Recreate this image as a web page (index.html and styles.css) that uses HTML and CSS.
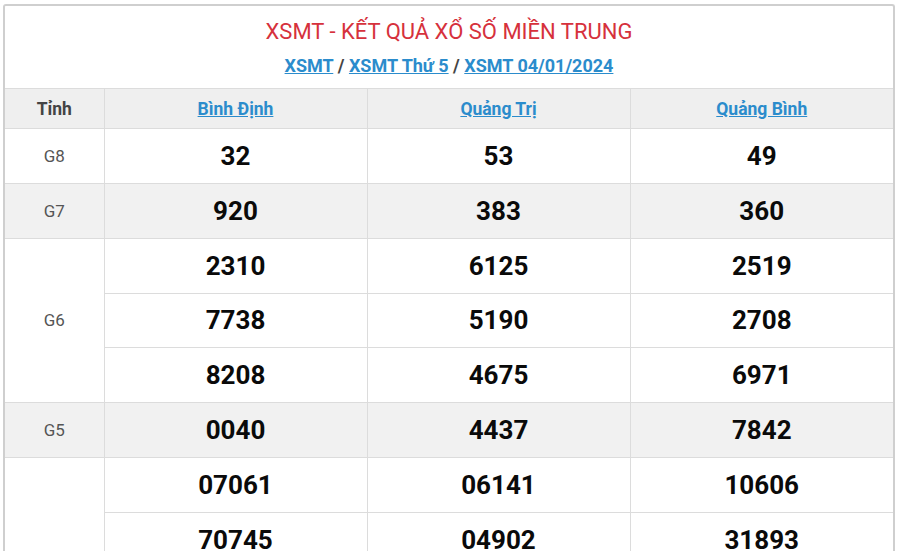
FILE: index.html
```html
<!DOCTYPE html>
<html lang="vi">
<head>
<meta charset="utf-8">
<title>XSMT</title>
<link rel="stylesheet" href="styles.css">
</head>
<body>
<div class="page">
  <div class="card">
    <div class="head">
      <h2 class="title">XSMT - KẾT QUẢ XỔ SỐ MIỀN TRUNG</h2>
      <div class="crumbs"><a href="#">XSMT</a> <span class="sep">/</span> <a href="#">XSMT Thứ 5</a> <span class="sep">/</span> <a href="#">XSMT 04/01/2024</a></div>
    </div>
    <table class="results">
      <colgroup><col class="c0"><col class="c1"><col class="c1"><col class="c1"></colgroup>
      <thead>
        <tr><th class="lbl">Tỉnh</th><th><a href="#">Bình Định</a></th><th><a href="#">Quảng Trị</a></th><th><a href="#">Quảng Bình</a></th></tr>
      </thead>
      <tbody>
        <tr><td class="lbl">G8</td><td>32</td><td>53</td><td>49</td></tr>
        <tr class="alt"><td class="lbl">G7</td><td>920</td><td>383</td><td>360</td></tr>
        <tr><td class="lbl" rowspan="3">G6</td><td>2310</td><td>6125</td><td>2519</td></tr>
        <tr><td>7738</td><td>5190</td><td>2708</td></tr>
        <tr><td>8208</td><td>4675</td><td>6971</td></tr>
        <tr class="alt"><td class="lbl">G5</td><td>0040</td><td>4437</td><td>7842</td></tr>
        <tr><td class="lbl" rowspan="2"></td><td>07061</td><td>06141</td><td>10606</td></tr>
        <tr><td>70745</td><td>04902</td><td>31893</td></tr>
      </tbody>
    </table>
  </div>
</div>
</body>
</html>
```
FILE: styles.css
```css
html, body { margin: 0; padding: 0; background: #fff; }
body { font-family: Roboto, "Liberation Sans", Arial, sans-serif; }
.page { padding: 4px 5px 0 3px; height: 551px; box-sizing: border-box; overflow: hidden; }
.card { border: 2px solid #cfcfcf; border-bottom: none; border-radius: 3px 3px 0 0; background: #fff; }
.head { height: 82px; text-align: center; box-sizing: border-box; padding-top: 13px; }
.title { margin: 0; font-weight: 400; font-size: 22px; line-height: 26px; color: #d6313c; }
.crumbs { margin-top: 10px; font-size: 18px; line-height: 22px; font-weight: 700; color: #444; }
.crumbs a { color: #2b8ccc; text-decoration: underline; }
.crumbs .sep { margin: 0; }
.results { width: 100%; border-collapse: collapse; table-layout: fixed; }
.c0 { width: 99px; }
.results th, .results td { border: 1px solid #dcdcdc; text-align: center; padding: 0; }
.results tr > :first-child { border-left: none; }
.results tr > :last-child { border-right: none; }
.results th { height: 39px; background: #efefef; font-size: 17.5px; font-weight: 700; color: #444; }
.results th a { color: #2b8ccc; text-decoration: underline; }
.results td { height: 53.85px; font-size: 26px; font-weight: 700; color: #0a0a0a; }
.results td.lbl { font-size: 17px; font-weight: 400; color: #555; }
.results tr.alt td { background: #f1f1f1; }
```
